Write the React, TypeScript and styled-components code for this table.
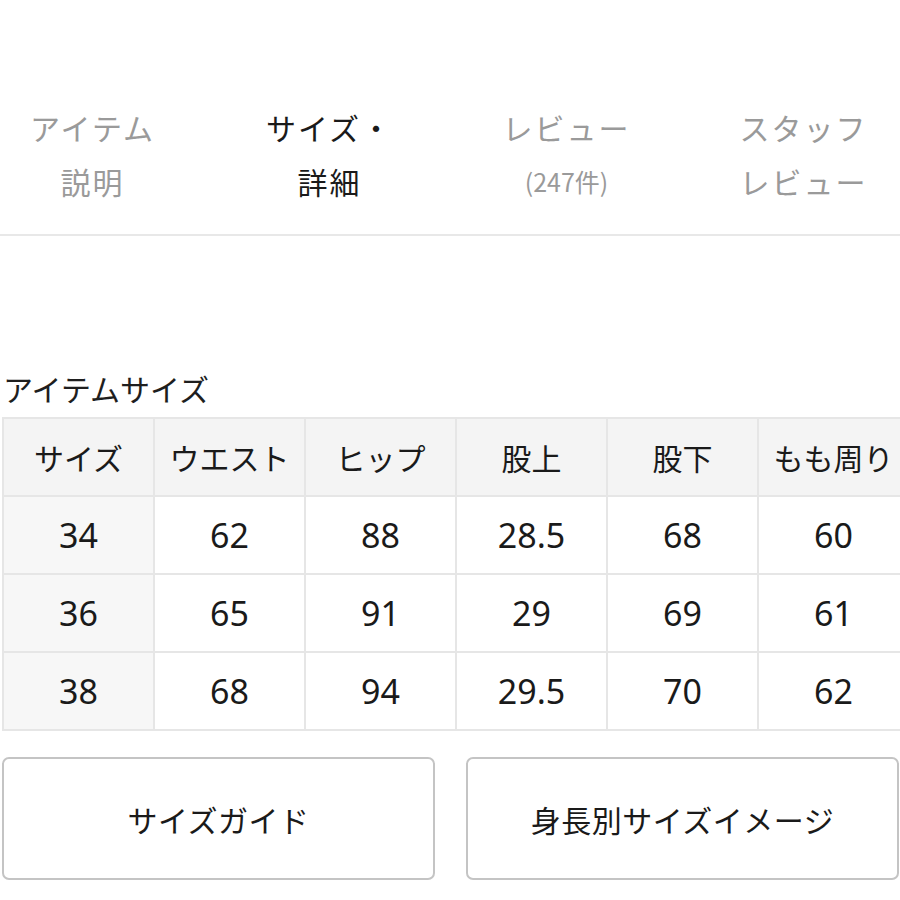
import React from "react";
import styled, { createGlobalStyle } from "styled-components";

const Global = createGlobalStyle`
  html, body { margin: 0; padding: 0; background: #fff; }
  body {
    font-family: "Noto Sans CJK JP", "Noto Sans", sans-serif;
    color: #222;
    width: 900px;
    overflow: hidden;
  }
`;

const Page = styled.div`
  width: 900px;
  overflow: hidden;
`;

const TabScroller = styled.div`
  width: 900px;
  overflow: hidden;
  border-bottom: 2px solid #e8e8e8;
`;

const TabBar = styled.div`
  display: flex;
  margin-left: -26px;
`;

const Tab = styled.div<{ $active?: boolean }>`
  flex: 0 0 237px;
  position: relative;
  box-sizing: border-box;
  padding: 100px 0 26px;
  text-align: center;
  font-size: 30px;
  line-height: 54px;
  letter-spacing: 2px;
  color: ${(p) => (p.$active ? "#1a1a1a" : "#9a9a9a")};
  ${(p) =>
    p.$active &&
    `
    &::after {
      content: "";
      position: absolute;
      left: 24px;
      right: 22px;
      bottom: -3px;
      height: 3px;
      background: #111;
    }
  `}
`;

const TabLine = styled.div<{ $small?: boolean }>`
  font-size: ${(p) => (p.$small ? "25px" : "30px")};
  letter-spacing: ${(p) => (p.$small ? "0" : "2px")};
  white-space: nowrap;
`;

const Section = styled.section`
  padding: 132px 0 0 2px;
`;

const Title = styled.h2`
  margin: 0 0 9px 1px;
  font-size: 30px;
  font-weight: 400;
  line-height: 40px;
  color: #1e1e1e;
`;

const Table = styled.table`
  border-collapse: collapse;
  table-layout: fixed;
  width: 906px;
`;

const Cell = styled.td<{ $head?: boolean; $first?: boolean }>`
  border: 2px solid #e6e6e6;
  height: 76px;
  padding: 0;
  text-align: center;
  vertical-align: middle;
  font-size: ${(p) => (p.$head ? "30px" : "34px")};
  font-family: ${(p) =>
    p.$head
      ? `"Noto Sans CJK JP", sans-serif`
      : `"Noto Sans", "Noto Sans CJK JP", sans-serif`};
  font-weight: 400;
  color: #1a1a1a;
  white-space: nowrap;
  background: ${(p) => (p.$head ? "#f4f4f4" : p.$first ? "#f7f7f7" : "#fff")};
`;

const Buttons = styled.div`
  display: grid;
  grid-template-columns: 433px 433px;
  gap: 31px;
  margin-top: 26px;
`;

const Button = styled.button`
  height: 123px;
  box-sizing: border-box;
  border: 2px solid #c4c4c4;
  border-radius: 7px;
  background: #fff;
  font-family: "Noto Sans CJK JP", sans-serif;
  font-size: 30px;
  letter-spacing: 0.5px;
  color: #1a1a1a;
  cursor: pointer;
`;

const tabs = [
  { lines: ["アイテム", "説明"] },
  { lines: ["サイズ・", "詳細"], active: true },
  { lines: ["レビュー", "(247件)"], smallSecond: true },
  { lines: ["スタッフ", "レビュー"] },
];

const headers = ["サイズ", "ウエスト", "ヒップ", "股上", "股下", "もも周り"];
const rows = [
  ["34", "62", "88", "28.5", "68", "60"],
  ["36", "65", "91", "29", "69", "61"],
  ["38", "68", "94", "29.5", "70", "62"],
];

export default function App() {
  return (
    <Page>
      <Global />
      <TabScroller>
        <TabBar>
          {tabs.map((t, i) => (
            <Tab key={i} $active={t.active}>
              <TabLine>{t.lines[0]}</TabLine>
              <TabLine $small={t.smallSecond}>{t.lines[1]}</TabLine>
            </Tab>
          ))}
        </TabBar>
      </TabScroller>
      <Section>
        <Title>アイテムサイズ</Title>
        <Table>
          <colgroup>
            <col style={{ width: 151 }} />
            <col style={{ width: 151 }} />
            <col style={{ width: 151 }} />
            <col style={{ width: 151 }} />
            <col style={{ width: 151 }} />
            <col style={{ width: 151 }} />
          </colgroup>
          <thead>
            <tr>
              {headers.map((h) => (
                <Cell as="th" key={h} $head>
                  {h}
                </Cell>
              ))}
            </tr>
          </thead>
          <tbody>
            {rows.map((r, ri) => (
              <tr key={ri}>
                {r.map((v, ci) => (
                  <Cell key={ci} $first={ci === 0}>
                    {v}
                  </Cell>
                ))}
              </tr>
            ))}
          </tbody>
        </Table>
        <Buttons>
          <Button>サイズガイド</Button>
          <Button>身長別サイズイメージ</Button>
        </Buttons>
      </Section>
    </Page>
  );
}
